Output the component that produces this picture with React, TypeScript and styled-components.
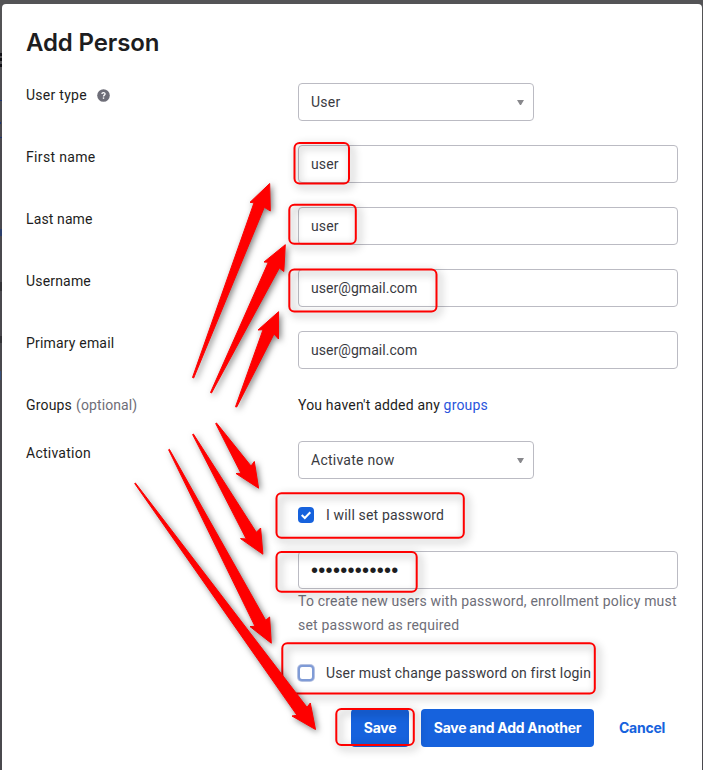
import React from 'react';
import styled, { createGlobalStyle } from 'styled-components';

const GlobalStyle = createGlobalStyle`
  * { box-sizing: border-box; }
  html, body { margin: 0; padding: 0; overflow: hidden; }
  body {
    font: 400 14px/24px Roboto, "Liberation Sans", sans-serif;
    letter-spacing: 0.18px;
    color: #1d1d21;
  }
`;

const Backdrop = styled.div`
  position: relative;
  width: 703px;
  height: 770px;
  padding: 4px 1px 0 2px;
  overflow: hidden;
  background:
    linear-gradient(#111116, #111116) 0 53px / 2px 3px no-repeat,
    linear-gradient(#111116, #111116) 0 58px / 2px 3px no-repeat,
    linear-gradient(#111116, #111116) 0 64px / 2px 3px no-repeat,
    linear-gradient(#1c3574, #1c3574) 0 100px / 2px 1px no-repeat,
    linear-gradient(#1c3574, #1c3574) 0 122px / 1px 2px no-repeat,
    linear-gradient(#1c3574, #1c3574) 0 137px / 2px 1px no-repeat,
    linear-gradient(#2b3f6c, #2b3f6c) 0 229px / 2px 7px no-repeat,
    linear-gradient(#333337, #333337) 0 282px / 2px 9px no-repeat,
    linear-gradient(#333337, #333337) 0 336px / 2px 7px no-repeat,
    linear-gradient(#38507a, #38507a) 0 371px / 1px 9px no-repeat,
    linear-gradient(#545456, #545456) 0 0 / 100% 4px no-repeat,
    linear-gradient(#545456, #4a494e 160px);
`;

const Modal = styled.main`
  height: 766px;
  padding: 21px 24px 0;
  border-radius: 4px 4px 0 0;
  background: #fff;
`;

const Title = styled.h1`
  height: 36px;
  margin: 0 0 22px;
  font: 600 24px/36px Inter, sans-serif;
  letter-spacing: -0.13px;
`;

const Row = styled.div<{ $height?: number }>`
  display: grid;
  grid-template-columns: 272px 380px;
  align-items: start;
  height: ${(p) => p.$height ?? 62}px;
`;

const Label = styled.label<{ $tracking?: number }>`
  display: flex;
  align-items: center;
  letter-spacing: ${(p) => p.$tracking ?? 0.18}px;
`;

const Optional = styled.span`
  margin-left: 4px;
  color: #6e6e78;
  letter-spacing: 0.1px;
`;

const HelpIcon = styled.svg`
  width: 13px;
  height: 13px;
  margin-left: 10px;
`;

const Field = styled.div<{ $narrow?: boolean; $top?: number }>`
  display: flex;
  align-items: center;
  justify-content: space-between;
  width: ${(p) => (p.$narrow ? 236 : 380)}px;
  height: 38px;
  margin-top: ${(p) => p.$top ?? 0}px;
  padding: 0 9px 0 12px;
  border: 1px solid #bbbbc3;
  border-radius: 4px;
  color: #3a3a3f;
`;

const Caret = styled.svg`
  width: 7px;
  height: 6px;
  margin-top: 2px;
`;

const Value = styled.span<{ $tracking?: number }>`
  letter-spacing: ${(p) => p.$tracking ?? 0.05}px;
`;

const Dots = styled.span`
  font: 20px/24px "Liberation Sans", sans-serif;
  letter-spacing: 0.3px;
  color: #1d1d21;
`;

const Message = styled.p`
  margin: 0;
`;

const Link = styled.a`
  color: #2a55dc;
  text-decoration: none;
`;

const Stack = styled.div`
  display: flex;
  flex-direction: column;
`;

const Check = styled.label`
  display: flex;
  align-items: center;
  gap: 12px;
  height: 24px;
  margin-top: 24px;
  color: #3a3a3f;
  letter-spacing: 0.16px;
  white-space: nowrap;
`;

const Box = styled.span<{ $checked?: boolean }>`
  display: grid;
  place-items: center;
  width: 16px;
  height: 16px;
  border: ${(p) => (p.$checked ? '0' : '2px solid #7f9bd6')};
  border-radius: 4px;
  background: ${(p) => (p.$checked ? '#1662dd' : '#fff')};
  box-shadow: ${(p) => (p.$checked ? 'none' : '0 0 0 1px #b7c3e2')};
`;

const Hint = styled.p`
  margin: 0;
  color: #6e6e78;
  letter-spacing: 0.2px;
  white-space: nowrap;
`;

const Footer = styled.footer`
  display: flex;
  justify-content: flex-end;
  gap: 12px;
  padding-top: 24px;
`;

const Button = styled.button<{ $plain?: boolean; $width: number }>`
  width: ${(p) => p.$width}px;
  height: 38px;
  padding: 0;
  border: 0;
  border-radius: 4px;
  background: ${(p) => (p.$plain ? 'transparent' : '#1662dd')};
  color: ${(p) => (p.$plain ? '#1662dd' : '#fff')};
  font: 700 14px/38px Inter, sans-serif;
  letter-spacing: -0.26px;
`;

const Annotations = styled.svg`
  position: absolute;
  inset: 0;
  pointer-events: none;
`;

const Highlight = styled.rect`
  fill: none;
  stroke: #fe0000;
  stroke-width: 2;
  filter: drop-shadow(3px 3px 4px rgba(0, 0, 0, 0.45));
`;

const Arrow = styled.polygon`
  fill: #fe0000;
  stroke: #fe0000;
  stroke-width: 1;
  stroke-linejoin: round;
  filter: drop-shadow(2px 2px 3px rgba(0, 0, 0, 0.5));
`;

const highlights = [
  [294.5, 143, 54.5, 40.5],
  [289.3, 204.7, 66.5, 39],
  [289.3, 269.5, 147.2, 42],
  [276.5, 493.2, 187.3, 44.6],
  [276.5, 552, 140.2, 39.8],
  [282.3, 643.3, 312.5, 50.2],
  [336.3, 709, 77.5, 36],
];

const arrows = [
  '192.5,377.5 254,202.8 250,202.3 269.7,183.5 270.3,211 264.3,207.3 193.7,378',
  '210.5,392.5 268.3,262.3 264,262 285.3,244.7 283.8,271.5 279.3,268 211.5,393',
  '235.5,406.8 263,329.7 258,330 278.6,311.7 278.5,339 274,334 236.7,407',
  '216.5,423 251,466 254.3,461.5 258.6,488.2 236,473.5 241,473.3 215.7,423.5',
  '193.4,434 256.3,532.3 260.6,528 262.9,554.2 240.5,538.6 246.3,539 192.6,434.5',
  '169.4,449.3 265.7,620.3 269.6,617 271.3,643.2 250,626.6 255,626.3 168.6,449.8',
  '135.4,483 307,707.3 310.3,703 315.5,729.5 292,716 297,715.3 134.7,483.5',
];

const Down = () => (
  <Caret viewBox="0 0 7 6"><path d="M0 0H7L4 5H3Z" fill="#88888c" /></Caret>
);

export default function App() {
  return (
    <>
      <GlobalStyle />
      <Backdrop>
        <Modal>
          <Title>Add Person</Title>
          <Row>
            <Label $tracking={0.28}>
              User type
              <HelpIcon viewBox="0 0 13 13">
                <circle cx="6.5" cy="6.5" r="6.3" fill="#6e6e78" />
                <path d="M4.9 5.1C4.9 3.1 8.1 3.1 8.1 5C8.1 6.2 6.5 6.1 6.5 7.5" fill="none" stroke="#fff" strokeWidth="1.3" />
                <rect x="5.8" y="8.4" width="1.4" height="1.4" fill="#fff" />
              </HelpIcon>
            </Label>
            <Field $narrow><Value $tracking={0.25}>User</Value><Down /></Field>
          </Row>
          <Row><Label $tracking={0.33}>First name</Label><Field><Value $tracking={0.1}>user</Value></Field></Row>
          <Row><Label $tracking={0.12}>Last name</Label><Field><Value $tracking={0.1}>user</Value></Field></Row>
          <Row><Label>Username</Label><Field><Value>user@gmail.com</Value></Field></Row>
          <Row><Label>Primary email</Label><Field><Value>user@gmail.com</Value></Field></Row>
          <Row $height={48}>
            <Label>Groups<Optional>(optional)</Optional></Label>
            <Message>You haven't added any <Link>groups</Link></Message>
          </Row>
          <Row $height={244}>
            <Label $tracking={0.25}>Activation</Label>
            <Stack>
              <Field $narrow><Value $tracking={0.25}>Activate now</Value><Down /></Field>
              <Check>
                <Box $checked>
                  <svg width="12" height="12" viewBox="0 0 12 12"><path d="M1.7 6L4.8 9L10.3 3.3" fill="none" stroke="#fff" strokeWidth="2" /></svg>
                </Box>
                I will set password
              </Check>
              <Field $top={24}><Dots>••••••••••••</Dots></Field>
              <Hint>To create new users with password, enrollment policy must<br />set password as required</Hint>
              <Check><Box />User must change password on first login</Check>
            </Stack>
          </Row>
          <Footer>
            <Button $width={58}>Save</Button>
            <Button $width={173}>Save and Add Another</Button>
            <Button $width={72} $plain>Cancel</Button>
          </Footer>
        </Modal>
        <Annotations width="703" height="770" viewBox="0 0 703 770">
          {highlights.map(([x, y, w, h]) => (
            <Highlight key={y} x={x} y={y} width={w} height={h} rx="5" />
          ))}
          {arrows.map((points) => <Arrow key={points} points={points} />)}
        </Annotations>
      </Backdrop>
    </>
  );
}
